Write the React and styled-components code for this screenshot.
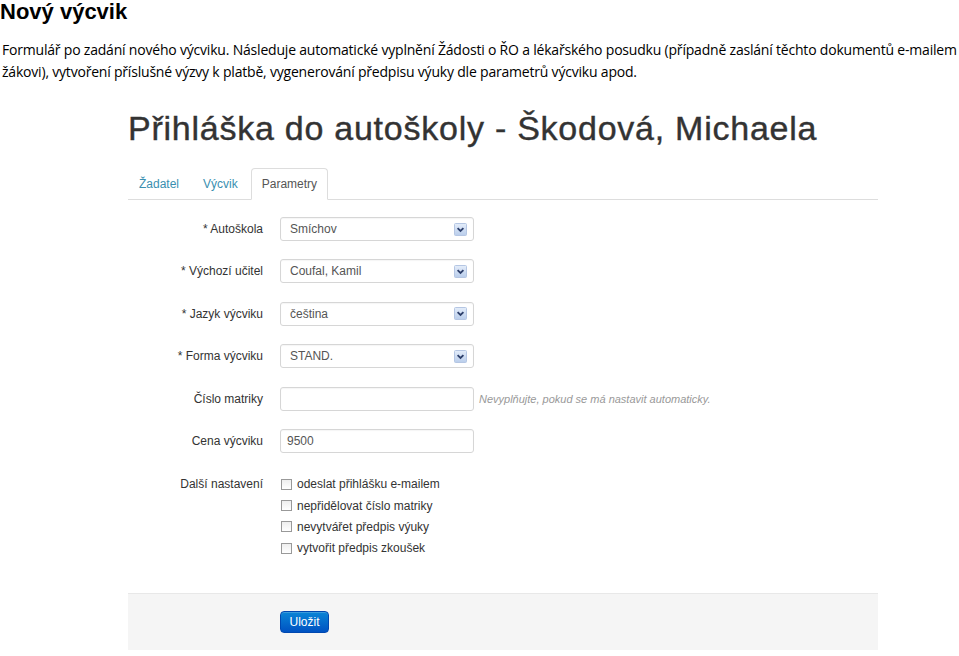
import styled, { createGlobalStyle } from 'styled-components'

const GlobalStyle = createGlobalStyle`
  html, body {
    margin: 0;
    padding: 0;
    background: #fff;
  }
`

const selects = [
  { label: '* Autoškola', value: 'Smíchov' },
  { label: '* Výchozí učitel', value: 'Coufal, Kamil' },
  { label: '* Jazyk výcviku', value: 'čeština' },
  { label: '* Forma výcviku', value: 'STAND.' },
]

const options = [
  'odeslat přihlášku e-mailem',
  'nepřidělovat číslo matriky',
  'nevytvářet předpis výuky',
  'vytvořit předpis zkoušek',
]

const ArrowIcon = () => (
  <svg width='13' height='13' viewBox='0 0 13 13'>
    <defs>
      <linearGradient id='arr' x1='0' y1='0' x2='0' y2='1'>
        <stop offset='0' stopColor='#e4edfa' />
        <stop offset='1' stopColor='#b9cdeb' />
      </linearGradient>
    </defs>
    <rect x='0.5' y='0.5' width='12' height='12' rx='1' fill='url(#arr)' stroke='#b5c6e3' />
    <path d='M3.6 5.2 L6.5 8 L9.4 5.2' fill='none' stroke='#2d3f6b' strokeWidth='1.8' />
  </svg>
)

const App = () => {
  return (
    <Page>
      <GlobalStyle />
      <DocTitle>Nový výcvik</DocTitle>
      <DocText>
        Formulář po zadání nového výcviku. Následuje automatické vyplnění Žádosti o ŘO a lékařského posudku (případně zaslání těchto dokumentů e-mailem
        <br />
        žákovi), vytvoření příslušné výzvy k platbě, vygenerování předpisu výuky dle parametrů výcviku apod.
      </DocText>

      <Shot>
        <FormTitle>Přihláška do autoškoly - Škodová, Michaela</FormTitle>
        <Tabs>
          <Tab>Žadatel</Tab>
          <Tab>Výcvik</Tab>
          <Tab $active>Parametry</Tab>
        </Tabs>

        <Fields>
          {selects.map((s) => (
            <Row key={s.label}>
              <Label>{s.label}</Label>
              <Select>
                <span>{s.value}</span>
                <ArrowIcon />
              </Select>
            </Row>
          ))}
          <Row>
            <Label>Číslo matriky</Label>
            <Input />
            <Help>Nevyplňujte, pokud se má nastavit automaticky.</Help>
          </Row>
          <Row>
            <Label>Cena výcviku</Label>
            <Input>9500</Input>
          </Row>
          <CheckRow>
            <Label>Další nastavení</Label>
            <CheckList>
              {options.map((o) => (
                <CheckItem key={o}>
                  <Box />
                  {o}
                </CheckItem>
              ))}
            </CheckList>
          </CheckRow>
        </Fields>

        <Actions>
          <SaveButton>Uložit</SaveButton>
        </Actions>
      </Shot>
    </Page>
  )
}

const Page = styled.div`
  width: 959px;
  min-height: 656px;
  overflow: hidden;
`

const DocTitle = styled.h1`
  margin: 0;
  font-family: 'Liberation Sans', Arial, sans-serif;
  font-weight: bold;
  font-size: 22px;
  line-height: 23px;
  color: #000;
`

const DocText = styled.p`
  margin: 16px 0 0 2px;
  font-family: 'Open Sans', 'Liberation Sans', sans-serif;
  font-size: 14px;
  line-height: 22px;
  letter-spacing: -0.2px;
  white-space: nowrap;
  color: #000;
`

const Shot = styled.div`
  margin: 27px 0 0 128px;
  width: 750px;
  font-family: 'Liberation Sans', Arial, sans-serif;
  font-size: 12px;
  color: #333;
`

const FormTitle = styled.div`
  font-size: 34px;
  line-height: 36px;
  letter-spacing: 0.75px;
  color: #333;
  -webkit-text-stroke: 0.4px #333;
  white-space: nowrap;
`

const Tabs = styled.div`
  display: flex;
  margin-top: 22px;
  height: 31px;
  border-bottom: 1px solid #ddd;
`

const Tab = styled.div`
  display: flex;
  align-items: center;
  padding: 0 10px;
  margin-right: 2px;
  margin-bottom: -1px;
  font-size: 12px;
  color: ${(p) => (p.$active ? '#555' : '#3a8fb0')};
  background: ${(p) => (p.$active ? '#fff' : 'transparent')};
  border: 1px solid ${(p) => (p.$active ? '#ddd' : 'transparent')};
  border-bottom-color: ${(p) => (p.$active ? '#fff' : 'transparent')};
  border-radius: 4px 4px 0 0;
`

const Fields = styled.div`
  display: flex;
  flex-direction: column;
  gap: 18.4px;
  padding-top: 17px;
`

const Row = styled.div`
  display: flex;
  align-items: center;
  height: 24px;
`

const CheckRow = styled.div`
  display: flex;
  align-items: flex-start;
  margin-top: 3px;
`

const Label = styled.div`
  width: 135px;
  margin-right: 17px;
  text-align: right;
  line-height: 20px;
  flex-shrink: 0;
`

const Select = styled.div`
  display: flex;
  align-items: center;
  justify-content: space-between;
  box-sizing: border-box;
  width: 194px;
  height: 24px;
  padding: 0 6px 0 9px;
  border: 1px solid #d6d6d6;
  border-radius: 3px;
  background: #fff;
  color: #555;
  box-shadow: inset 0 1px 1px rgba(0, 0, 0, 0.04);
`

const Input = styled.div`
  display: flex;
  align-items: center;
  box-sizing: border-box;
  width: 194px;
  height: 24px;
  padding: 0 6px;
  border: 1px solid #d6d6d6;
  border-radius: 3px;
  background: #fff;
  color: #555;
  box-shadow: inset 0 1px 1px rgba(0, 0, 0, 0.04);
`

const Help = styled.span`
  margin-left: 5px;
  font-size: 11px;
  font-style: italic;
  color: #999;
  white-space: nowrap;
`

const CheckList = styled.div`
  display: flex;
  flex-direction: column;
  gap: 1.3px;
`

const CheckItem = styled.div`
  display: flex;
  align-items: center;
  height: 20px;
  color: #333;
`

const Box = styled.span`
  box-sizing: border-box;
  width: 11px;
  height: 11px;
  margin: 0 5px 0 1px;
  border: 1px solid #999;
  background: linear-gradient(#eee, #fff);
`

const Actions = styled.div`
  display: flex;
  align-items: center;
  margin-top: 35px;
  height: 56px;
  padding-left: 152px;
  background: #f5f5f5;
  border-top: 1px solid #e8e8e8;
`

const SaveButton = styled.button`
  box-sizing: border-box;
  width: 49px;
  height: 22px;
  padding: 0;
  font-family: 'Liberation Sans', Arial, sans-serif;
  font-size: 12px;
  color: #fff;
  background: linear-gradient(#0a85d6, #0052c2);
  border: 1px solid #0048b0;
  border-radius: 4px;
  box-shadow: inset 0 1px 0 rgba(255, 255, 255, 0.2);
`

export default App
